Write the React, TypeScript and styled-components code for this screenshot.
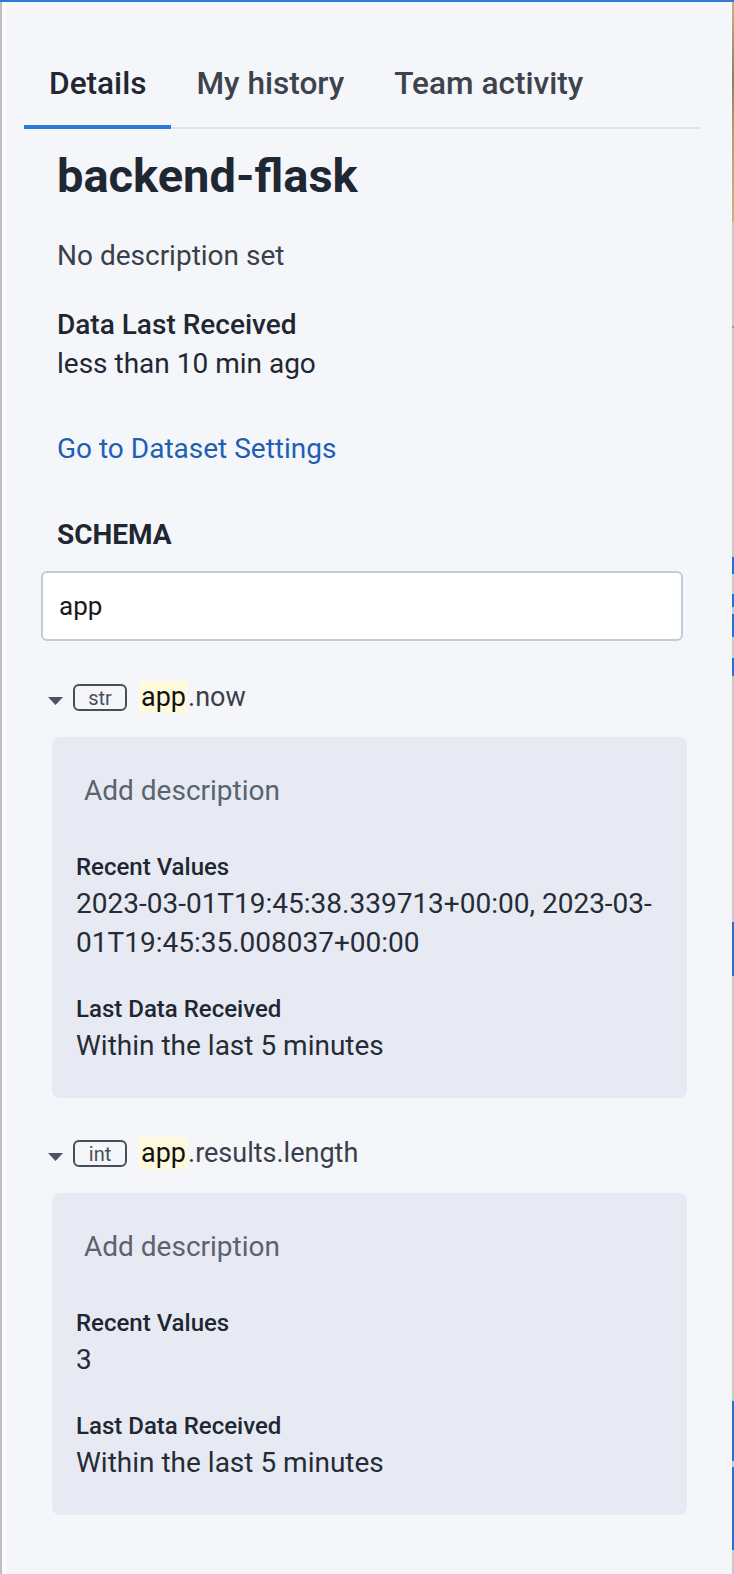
import React from 'react';
import styled, { createGlobalStyle } from 'styled-components';

const panelBg = '#f4f6fa';
const cardBg = '#e7eaf2';
const textDark = '#1f2733';
const textMuted = '#5b6270';
const accent = '#2b7bd6';

const GlobalStyle = createGlobalStyle`
  html, body {
    margin: 0;
    padding: 0;
    background: ${panelBg};
  }
  body {
    font-family: Roboto, "Liberation Sans", Arial, sans-serif;
    color: ${textDark};
  }
  * { box-sizing: border-box; }
`;

const Frame = styled.div`
  display: flex;
  min-height: 100vh;
  border-top: 2px solid ${accent};
`;

const LeftRail = styled.div`
  width: 7px;
  flex: none;
  border-left: 2px solid #bfbfbf;
  background: #fafbfc;
`;

const RightStrip = styled.div`
  width: 2px;
  flex: none;
  display: flex;
  flex-direction: column;
`;

type SegmentProps = { $h: number; $c: string };

const Segment = styled.div<SegmentProps>`
  height: ${({ $h }) => $h}px;
  flex: none;
  background: ${({ $c }) => $c};
`;

const Panel = styled.div`
  flex: 1;
  padding: 63px 32px 60px 17px;
  background: ${panelBg};
`;

const TabList = styled.div`
  display: flex;
  border-bottom: 2px solid #dde1ec;
`;

type TabProps = { $active?: boolean };

const Tab = styled.div<TabProps>`
  padding: 0 25px 22px;
  margin-bottom: -2px;
  font-size: 31.6px;
  line-height: 38px;
  font-weight: 500;
  color: ${({ $active }) => ($active ? textDark : '#3d434d')};
  border-bottom: 4px solid ${({ $active }) => ($active ? accent : 'transparent')};
  white-space: nowrap;
`;

const Header = styled.div`
  padding-left: 33px;
`;

const Title = styled.h1`
  margin: 18px 0 0;
  font-size: 47px;
  line-height: 58px;
  font-weight: 700;
  color: ${textDark};
`;

const BodyText = styled.div`
  font-size: 28px;
  line-height: 39px;
  color: ${textDark};
`;

const Description = styled(BodyText)`
  margin-top: 31px;
  color: #3a404b;
`;

const Stat = styled.div`
  margin-top: 30px;
`;

const StatLabel = styled(BodyText)`
  font-weight: 500;
`;

const Link = styled.a`
  display: block;
  margin-top: 46px;
  font-size: 28px;
  line-height: 39px;
  color: #1e5fb5;
  text-decoration: none;
`;

const SectionTitle = styled(BodyText)`
  margin-top: 47px;
  font-weight: 700;
`;

const SearchInput = styled.input`
  display: block;
  margin: 17px 0 0 17px;
  width: 642px;
  height: 70px;
  padding: 0 16px;
  border: 2px solid #c3cadb;
  border-radius: 6px;
  background: #fff;
  font-family: inherit;
  font-size: 26px;
  color: #161a20;
  outline: none;
`;

const FieldList = styled.div`
  margin-top: 41px;
  display: flex;
  flex-direction: column;
  gap: 40px;
`;

const FieldRow = styled.div`
  display: flex;
  align-items: center;
  height: 31px;
  padding-left: 24px;
`;

const Caret = styled.svg`
  width: 15px;
  height: 8px;
  margin: 7px 10px 0 0;
  fill: #4b5260;
  flex: none;
`;

const TypeBadge = styled.span`
  display: flex;
  align-items: center;
  justify-content: center;
  width: 54px;
  height: 27px;
  margin-right: 12px;
  border: 2px solid #474e5a;
  border-radius: 6px;
  font-size: 20px;
  line-height: 1;
  color: #474e5a;
`;

const FieldName = styled.span`
  font-size: 27px;
  line-height: 31px;
  color: #3a404b;
`;

const Match = styled.mark`
  background: #fefadb;
  color: #111;
  padding: 0 2px;
`;

const Card = styled.div`
  margin: 24px 0 0 28px;
  width: 635px;
  padding: 24px 24px 33px;
  background: ${cardBg};
  border-radius: 8px;
`;

const AddDescription = styled.button`
  display: block;
  padding: 10px 8px;
  border: none;
  background: transparent;
  font-family: inherit;
  font-size: 28px;
  line-height: 39px;
  color: ${textMuted};
  text-align: left;
  cursor: pointer;
`;

const CardSection = styled.div`
  margin-top: 31px;
`;

const CardLabel = styled.div`
  font-size: 24px;
  line-height: 33px;
  font-weight: 500;
  color: ${textDark};
`;

const CardValue = styled(BodyText)`
  color: #262c36;
`;

type Field = {
  type: string;
  match: string;
  rest: string;
  values: React.ReactNode;
  lastReceived: string;
};

const fields: Field[] = [
  {
    type: 'str',
    match: 'app',
    rest: '.now',
    values: (
      <>
        2023-03-01T19:45:38.339713+00:00, 2023-03-<wbr />01T19:45:35.008037+00:00
      </>
    ),
    lastReceived: 'Within the last 5 minutes',
  },
  {
    type: 'int',
    match: 'app',
    rest: '.results.length',
    values: '3',
    lastReceived: 'Within the last 5 minutes',
  },
];

const strip: [number, string][] = [
  [220, 'linear-gradient(#c6b47c, #8f7f5c 35%, #b3a16c 60%, #c8b67e)'],
  [104, '#c9c9c9'],
  [2, '#9a9a9a'],
  [229, '#c9c9c9'],
  [17, '#2c6fd0'],
  [20, '#c9c9c9'],
  [13, '#2c6fd0'],
  [7, '#c9c9c9'],
  [23, '#2c6fd0'],
  [21, '#c9c9c9'],
  [18, '#2c6fd0'],
  [246, '#c9c9c9'],
  [54, '#2c6fd0'],
  [425, '#c9c9c9'],
  [60, '#2c6fd0'],
  [6, '#c9c9c9'],
  [83, '#2c6fd0'],
  [40, '#c9c9c9'],
];

function SchemaField({ field }: { field: Field }) {
  return (
    <div>
      <FieldRow>
        <Caret viewBox="0 0 15 8">
          <polygon points="0,0 15,0 7.5,8" />
        </Caret>
        <TypeBadge>{field.type}</TypeBadge>
        <FieldName>
          <Match>{field.match}</Match>
          {field.rest}
        </FieldName>
      </FieldRow>
      <Card>
        <AddDescription>Add description</AddDescription>
        <CardSection>
          <CardLabel>Recent Values</CardLabel>
          <CardValue>{field.values}</CardValue>
        </CardSection>
        <CardSection>
          <CardLabel>Last Data Received</CardLabel>
          <CardValue>{field.lastReceived}</CardValue>
        </CardSection>
      </Card>
    </div>
  );
}

export default function App() {
  return (
    <>
      <GlobalStyle />
      <Frame>
        <LeftRail />
        <Panel>
          <TabList>
            <Tab $active>Details</Tab>
            <Tab>My history</Tab>
            <Tab>Team activity</Tab>
          </TabList>

          <Header>
            <Title>backend-flask</Title>
            <Description>No description set</Description>
            <Stat>
              <StatLabel>Data Last Received</StatLabel>
              <BodyText>less than 10 min ago</BodyText>
            </Stat>
            <Link href="#">Go to Dataset Settings</Link>
            <SectionTitle>SCHEMA</SectionTitle>
          </Header>

          <SearchInput defaultValue="app" />

          <FieldList>
            {fields.map((f) => (
              <SchemaField key={f.rest} field={f} />
            ))}
          </FieldList>
        </Panel>
        <RightStrip>
          {strip.map(([h, c], i) => (
            <Segment key={i} $h={h} $c={c} />
          ))}
        </RightStrip>
      </Frame>
    </>
  );
}
